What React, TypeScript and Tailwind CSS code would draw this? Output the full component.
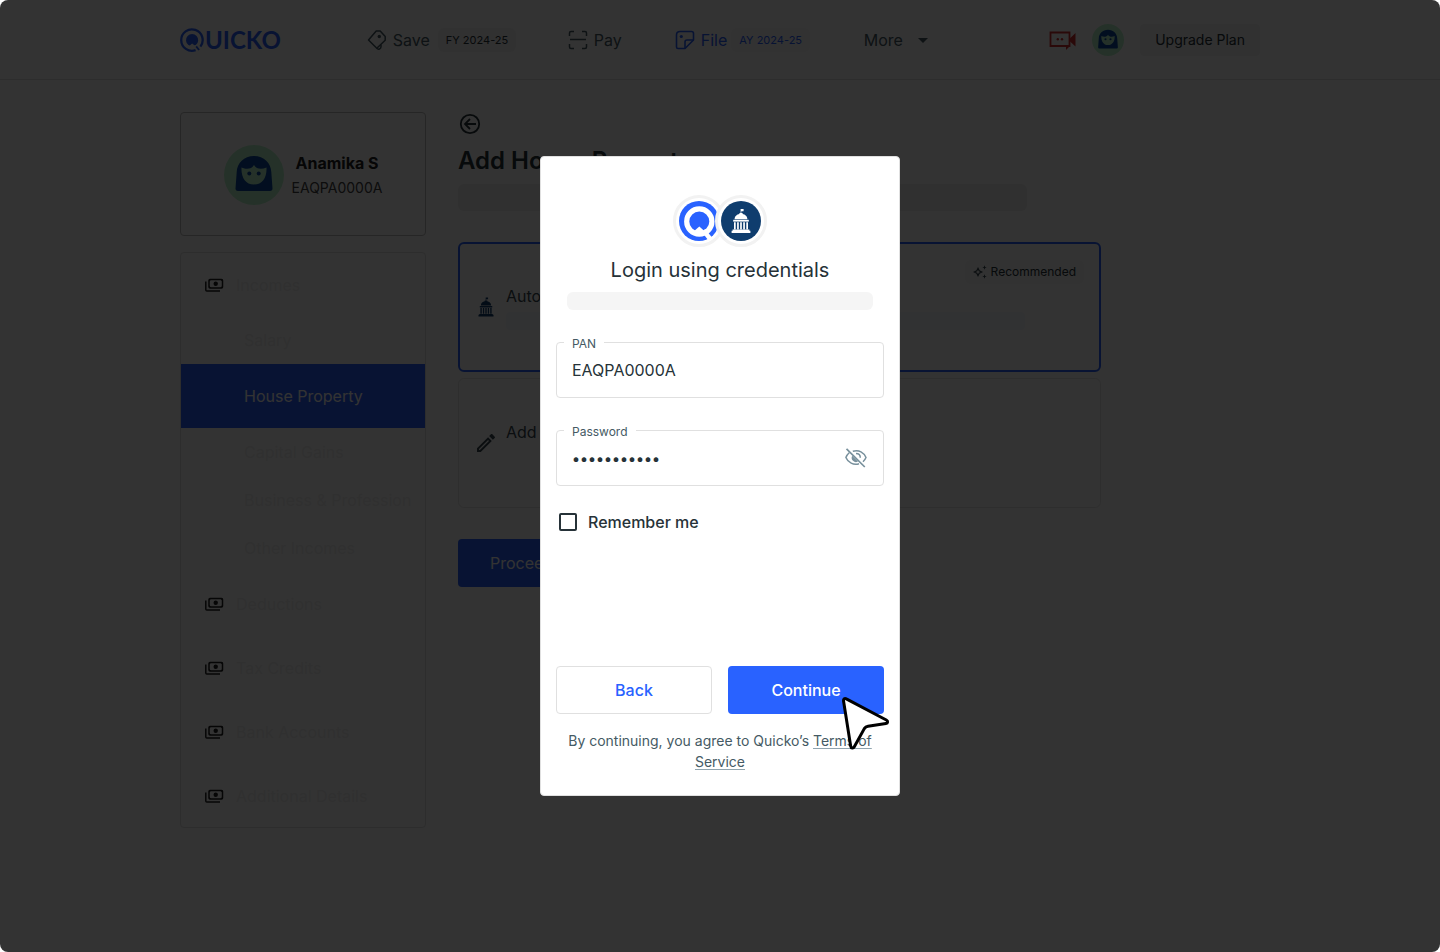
import React from "react";
import { MdOutlineEdit, MdArrowDropDown } from "react-icons/md";

function QuickoMark({ className }: { className: string }) {
  return (
    <svg viewBox="0 0 24 24" className={className} fill="none" aria-hidden="true">
      <path d="M15.6 22.1A10.7 10.7 0 1 1 20.4 18.6" stroke="#2962ff" strokeWidth="2.3" />
      <path
        d="M8.4 17A6.100 6.100 0 1 1 15.800 17L14.400 17.300 12.100 15.400 9.800 17.400z"
        fill="#2962ff"
      />
      <path d="M16.2 18.4l2.9 3.6" stroke="#2962ff" strokeWidth="1.8" />
    </svg>
  );
}

function Capitol({ className }: { className: string }) {
  return (
    <svg viewBox="0 0 20 24" className={className} fill="currentColor" aria-hidden="true">
      <path d="M9.6 0H12.6V2.2H10.3V4H9.6z" />
      <path d="M3.6 10.2C3.6 7 6 5.4 8.4 4.9V4h3.2v.9c2.4.5 4.8 2.1 4.8 5.3z" />
      <rect x="2.2" y="10.8" width="15.6" height="1.8" />
      <path d="M3 13.2h1.7v7.2H3zM6.1 13.2h1.7v7.2H6.1zM9.15 13.2h1.7v7.2h-1.7zM12.2 13.2h1.7v7.2h-1.7zM15.3 13.2H17v7.2h-1.7z" />
      <path d="M1.6 20.6h16.8v1.2h1V24H.6v-2.2h1z" />
    </svg>
  );
}

function Avatar({ className }: { className: string }) {
  return (
    <svg viewBox="0 0 60 60" className={className} aria-hidden="true">
      <circle cx="30" cy="30" r="30" fill="#b9f6ca" />
      <path
        d="M30 11c-10 0-17 7-17.300 16L11.500 43.500c0 1.500.800 2.500 2.500 2.500h32c1.700 0 2.500-1 2.500-2.500L47.300 27C47 18 40 11 30 11z"
        fill="#0d47a1"
      />
      <path
        d="M17.500 22.500c5.500 2.500 10 1.500 12.500-2.500 2.500 4 7 5 12.500 2.500.5 10-4 17-12.500 17s-13-7-12.500-17z"
        fill="#b9f6ca"
      />
      <circle cx="25.300" cy="28.500" r="2" fill="#0d47a1" />
      <circle cx="34.700" cy="28.500" r="2" fill="#0d47a1" />
    </svg>
  );
}

function TagIcon() {
  return (
    <svg viewBox="0 0 20 22" className="h-[22px] w-5 shrink-0" fill="none" stroke="currentColor" strokeWidth="1.500" strokeLinejoin="round" aria-hidden="true">
      <path d="M9.200 2h4l5 5.500v3.700L9.800 19.300 1.500 11z" />
      <path d="M9.800 19.300c1.500 1.700 4.200.7 4.200-1.500v-2" />
      <circle cx="12.300" cy="7.500" r="1.700" fill="currentColor" stroke="none" />
    </svg>
  );
}

function ScanIcon() {
  return (
    <svg viewBox="0 0 20 20" className="size-5 shrink-0" fill="none" stroke="currentColor" strokeWidth="1.500" aria-hidden="true">
      <path d="M1.500 6V3q0-1.500 1.500-1.500h3M14 1.500h3q1.500 0 1.500 1.500v3M18.500 14v3q0 1.500-1.500 1.500h-3M6 18.500H3q-1.500 0-1.500-1.500v-3M2 9.500h16" />
    </svg>
  );
}

function NoteIcon() {
  return (
    <svg viewBox="0 0 20 20" className="size-5 shrink-0" fill="none" stroke="currentColor" strokeWidth="1.600" strokeLinejoin="round" aria-hidden="true">
      <path d="M10 18.500H3q-1.500 0-1.500-1.500V5Q1.500 1.500 5 1.500h11.500q2 0 2 2V10z" />
      <path d="M10 18.500V12q0-2 2-2h6.500" />
      <circle cx="6.300" cy="6.500" r="1.600" fill="currentColor" stroke="none" />
    </svg>
  );
}

function VideoIcon() {
  return (
    <svg viewBox="0 0 27 20" className="h-5 w-[27px]" aria-hidden="true">
      <path d="M1.500 2.500h19v13.500h-19z" fill="none" stroke="#d32f2f" strokeWidth="1.800" />
      <path d="M20.500 8.800L26.500 3v13.500l-6-5.500zM17 16h4L17 20z" fill="#d32f2f" />
      <circle cx="8.800" cy="9.200" r="1.200" fill="#d32f2f" />
      <circle cx="13" cy="9.200" r="1.200" fill="#d32f2f" />
    </svg>
  );
}

function PaymentsIcon() {
  return (
    <svg viewBox="0 0 24 24" className="size-6 shrink-0 text-[#212121]" fill="none" stroke="currentColor" strokeWidth="1.500" aria-hidden="true">
      <rect x="7" y="6.500" width="13.500" height="8.500" rx="1" />
      <path d="M3.800 8.500v8.500q0 1 1 1H18" />
      <circle cx="13.700" cy="10.700" r="2.200" fill="currentColor" stroke="none" />
      <path d="M7 8.800L9.300 6.500H7zM20.500 8.800L18.200 6.500h2.300zM7 12.700L9.300 15H7zM20.500 12.700L18.200 15h2.300z" fill="currentColor" stroke="none" />
    </svg>
  );
}

function BackIcon() {
  return (
    <svg viewBox="0 0 24 24" className="size-6" fill="none" stroke="currentColor" strokeWidth="1.800" aria-hidden="true">
      <circle cx="12" cy="12" r="9.200" />
      <path d="M18 12H7.500M12 7l-5 5 5 5" />
    </svg>
  );
}

function SparkleIcon() {
  return (
    <svg viewBox="0 0 14 14" className="size-[14px]" aria-hidden="true">
      <path d="M5 3.300L6.200 5.800 8.700 7 6.200 8.200 5 10.700 3.800 8.200 1.300 7 3.800 5.800z" fill="none" stroke="#37474f" strokeWidth="1.200" />
      <path d="M11.500.3l.6 1.600 1.600.6-1.600.6-.6 1.600-.6-1.600-1.600-.6 1.600-.6zM11.500 9.300l.6 1.600 1.600.6-1.600.6-.6 1.600-.6-1.600-1.600-.6 1.600-.6z" fill="#37474f" />
    </svg>
  );
}

function EyeOffIcon() {
  return (
    <svg viewBox="0 0 24 24" className="size-6" fill="none" stroke="#78909c" strokeWidth="1.500" aria-hidden="true">
      <path d="M8.800 5.300C15 3.300 20 6.700 22 11.500c-.7 1.700-1.700 3.100-3 4.200M5.200 6.700C3.700 8 2.500 9.600 1.900 11.500c2 5 7.600 8 13.100 6.200" />
      <path d="M12 7.500c2.500 0 4.300 1.800 4.300 4.200" />
      <path d="M8.200 9.800a4.300 4.300 0 0 0 5.800 5.800z" fill="#78909c" stroke="none" />
      <path d="M2.500 2.800L20.800 21" strokeWidth="1.700" />
    </svg>
  );
}

function Pointer() {
  return (
    <svg viewBox="0 0 50 56" className="pointer-events-none absolute right-[9px] bottom-11 h-14 w-[50px]" aria-hidden="true">
      <path
        d="M3.500 5.800c-.2-2 1.200-2.800 2.800-1.900L46.300 25c2 1.100 1.600 3.300-.4 3.600L28 31.200c-1.800.3-2.800 1-3.700 2.400l-10 18.200c-1 1.800-3.300 1.500-3.600-.5z"
        fill="#fff"
        stroke="#000"
        strokeWidth="3"
        strokeLinejoin="round"
      />
    </svg>
  );
}

function TopBar() {
  return (
    <header className="h-20 border-b border-[#e0e0e0]">
      <div className="mx-auto flex h-full max-w-[1080px] items-center">
        <a href="#home" aria-label="Quicko" className="flex items-center gap-px">
          <QuickoMark className="size-6" />
          <span aria-hidden="true" className="font-['Lato',sans-serif] text-2xl leading-6 font-bold text-[#2962ff]">UICKO</span>
        </a>
        <nav className="ml-[86px] grid grid-cols-[146px_52px_134px_66px] gap-[55px] text-base text-[#455a64]">
          <a href="#save" className="flex items-center gap-1.5 whitespace-nowrap">
            <TagIcon />
            Save
            <span className="ml-0.5 rounded-md bg-[#f5f5f5] px-2 py-1 text-[11px] leading-4 text-[#263238]">FY 2024-25</span>
          </a>
          <a href="#pay" className="flex items-center gap-1.5"><ScanIcon />Pay</a>
          <a href="#file" className="flex items-center gap-1 whitespace-nowrap text-[#2962ff]">
            <NoteIcon />
            <span className="pl-0.5">File</span>
            <span className="rounded-md bg-[#fafafa] px-2 py-1 text-[11px] leading-4">AY 2024-25</span>
          </a>
          <button type="button" className="flex items-center gap-2">More<MdArrowDropDown className="size-6 shrink-0" /></button>
        </nav>
        <div className="ml-auto flex items-center gap-4">
          <VideoIcon />
          <Avatar className="size-8" />
          <button type="button" className="h-8 rounded bg-[#f5f5f5] px-[15px] text-sm text-[#263238]">Upgrade Plan</button>
        </div>
      </div>
    </header>
  );
}

const menu = [
  { label: "Incomes", kind: "edge" },
  { label: "Salary", kind: "sub" },
  { label: "House Property", kind: "active" },
  { label: "Capital Gains", kind: "sub" },
  { label: "Business & Profession", kind: "sub" },
  { label: "Other Incomes", kind: "sub" },
  { label: "Deductions", kind: "group" },
  { label: "Tax Credits", kind: "group" },
  { label: "Bank Accounts", kind: "group" },
  { label: "Additional Details", kind: "edge" },
];

const rowStyles: Record<string, string> = {
  edge: "h-[63px] pl-[21px] text-[#eeeeee]",
  group: "h-16 pl-[21px] text-[#eeeeee]",
  sub: "h-12 pl-[63px] text-[#eeeeee]",
  active: "h-16 bg-[#2962ff] pl-[63px] text-white",
};

function Sidebar() {
  return (
    <aside className="flex w-[246px] shrink-0 flex-col gap-4">
      <section className="flex h-[124px] items-center justify-center gap-2 rounded border border-[#bdbdbd] pt-0.5">
        <Avatar className="size-[60px]" />
        <div className="text-center">
          <p className="text-base leading-[26px] font-bold text-[#212121]">Anamika S</p>
          <p className="text-sm leading-6 text-[#424242]">EAQPA0000A</p>
        </div>
      </section>
      <ul className="rounded border border-[#e0e0e0]">
        {menu.map((item) => (
          <li key={item.label}>
            <a href="#section" className={`flex items-center gap-2.5 whitespace-nowrap ${rowStyles[item.kind]}`}>
              {(item.kind === "group" || item.kind === "edge") && <PaymentsIcon />}
              {item.label}
            </a>
          </li>
        ))}
      </ul>
    </aside>
  );
}

function Page() {
  return (
    <div>
      <TopBar />
      <div className="mx-auto flex max-w-[1080px] gap-8 pt-8">
        <Sidebar />
        <main className="min-w-0 flex-1 pr-[159px]">
          <button type="button" aria-label="Go back" className="block text-[#263238]"><BackIcon /></button>
          <h1 className="mt-[9px] text-2xl font-semibold text-[#263238]">Add House Property</h1>
          <div className="mt-[7px] mr-[74px] h-[27px] rounded-md bg-[#f0f0f0]" />
          <div className="relative mt-[31px] flex h-[130px] items-center gap-2 rounded-md border-2 border-[#2962ff] px-3.5">
            <div className="flex size-6 items-center justify-center"><Capitol className="h-5 w-4 text-[#0f3d6e]" /></div>
            <div className="flex-1">
              <p className="text-[#37474f]">Auto Import</p>
              <div className="mt-1 mr-[60px] h-[18px] rounded bg-[#f5f8ff]" />
            </div>
            <span className="absolute top-4 right-[15px] flex items-center gap-1 rounded-md bg-[#f9f9f9] px-2 py-1 text-xs text-[#263238]">
              <SparkleIcon />
              Recommended
            </span>
          </div>
          <div className="mt-1.5 flex h-[130px] items-center gap-2 rounded-md border border-[#e6e6e6] px-[15px]">
            <MdOutlineEdit className="size-6 text-[#37474f]" />
            <div className="flex-1">
              <p className="text-[#37474f]">Add Manually</p>
              <div className="mt-1 mr-[60px] h-[18px] rounded bg-[#fcfcfc]" />
            </div>
          </div>
          <button type="button" className="mt-[31px] h-12 rounded bg-[#2962ff] px-8 text-white">Proceed</button>
        </main>
      </div>
    </div>
  );
}

function LoginDialog() {
  return (
    <section role="dialog" aria-label="Login using credentials" className="relative w-[360px] rounded border border-[#e0e0e0] bg-white px-[15px] pt-[38px] pb-[23px]">
      <div className="flex justify-center">
        <div className="-mr-2.5 rounded-full border-3 border-[#f2f2f2] bg-white p-[3px]">
          <svg viewBox="0 0 40 40" className="size-10" aria-hidden="true">
            <circle cx="20" cy="20" r="20" fill="#2962ff" />
            <circle cx="20.300" cy="20.500" r="12.600" fill="none" stroke="#fff" strokeWidth="5.200" />
            <path d="M14 31L20.300 25.500 26.500 31z" fill="#fff" />
            <path d="M24.500 29.500L32 39" stroke="#fff" strokeWidth="4.500" />
          </svg>
        </div>
        <div className="rounded-full border-3 border-[#f2f2f2] bg-white p-[3px]">
          <div className="flex size-10 items-center justify-center rounded-full bg-[#0f3d6e]">
            <Capitol className="h-6 w-5 text-white" />
          </div>
        </div>
      </div>
      <h2 className="mt-[9px] text-center text-xl leading-7 text-[#263238]">Login using credentials</h2>
      <div className="mx-[11px] mt-2 h-[18px] rounded-md bg-[#f5f5f5]" />
      <form onSubmit={(e) => e.preventDefault()}>
        <div className="relative mt-8 h-14 rounded border border-[#e0e0e0] px-[15px] pt-[7px]">
          <label htmlFor="pan" className="absolute -top-[7px] left-[7px] bg-white px-2 text-xs leading-4 text-[#455a64]">PAN</label>
          <input id="pan" defaultValue="EAQPA0000A" className="h-10 w-full bg-transparent text-[#263238] outline-none" />
        </div>
        <div className="relative mt-8 flex h-14 items-center rounded border border-[#e0e0e0] px-[15px]">
          <label htmlFor="password" className="absolute -top-[7px] left-[7px] bg-white px-2 text-xs leading-4 text-[#455a64]">Password</label>
          <input id="password" type="password" defaultValue="password123" className="h-8 min-w-0 flex-1 bg-transparent text-[15px] font-medium text-[#263238] outline-none" />
          <button type="button" aria-label="Show password"><EyeOffIcon /></button>
        </div>
        <label className="mt-6 flex h-6 items-center gap-[11px] pl-[3px] font-medium text-[#263238]">
          <input type="checkbox" className="size-[18px] appearance-none rounded-xs border-2 border-[#263238]" />
          Remember me
        </label>
        <div className="mt-[132px] grid grid-cols-2 gap-4 font-medium">
          <button type="button" className="h-12 rounded border border-[#e0e0e0] text-[#2962ff]">Back</button>
          <button type="submit" className="h-12 rounded bg-[#2962ff] text-white">Continue</button>
        </div>
      </form>
      <p className="mt-4 text-center text-sm leading-[21px] text-[#455a64]">
        By continuing, you agree to Quicko’s{" "}
        <a href="#terms" className="underline decoration-[#90a4ae] decoration-1 underline-offset-2">Terms of Service</a>
      </p>
      <Pointer />
    </section>
  );
}

export default function App() {
  return (
    <div className="relative min-h-screen overflow-hidden bg-white font-['Inter','Liberation_Sans',sans-serif]">
      <Page />
      <div className="fixed inset-0 flex items-center justify-center rounded-lg bg-black/80">
        <LoginDialog />
      </div>
    </div>
  );
}
